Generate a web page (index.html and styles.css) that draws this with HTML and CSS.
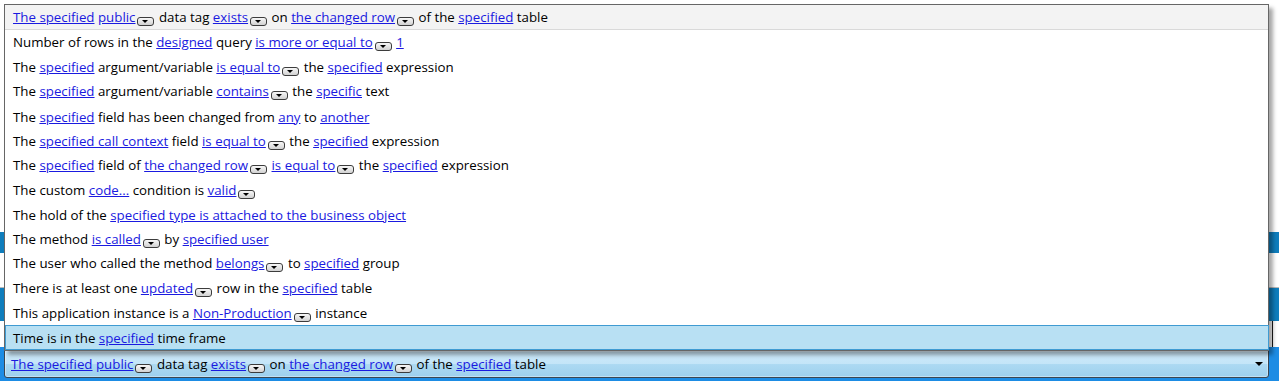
FILE: index.html
```html
<!DOCTYPE html>
<html lang="en">
<head>
  <meta charset="UTF-8" />
  <title>Condition picker</title>
  <link rel="stylesheet" href="styles.css">
</head>
<body>
  <div class="screen">
    <div class="band plain top"></div>
    <div class="band blue short"></div>
    <div class="band plain mid"></div>
    <div class="band blue tall"></div>
    <div class="band plain low"></div>

    <div class="band editor">
      <div class="combo">
        <span class="txt"><a>The specified</a> <a>public</a><span class="dd"></span> data tag <a>exists</a><span class="dd"></span> on <a>the changed row</a><span class="dd"></span> of the <a>specified</a> table</span>
        <span class="arrow"></span>
      </div>
    </div>

    <div class="popup">
      <div class="row head"><span class="txt"><a>The specified</a> <a>public</a><span class="dd"></span> data tag <a>exists</a><span class="dd"></span> on <a>the changed row</a><span class="dd"></span> of the <a>specified</a> table</span></div>
      <div class="row"><span class="txt">Number of rows in the <a>designed</a> query <a>is more or equal to</a><span class="dd"></span> <a>1</a></span></div>
      <div class="row"><span class="txt">The <a>specified</a> argument/variable <a>is equal to</a><span class="dd"></span> the <a>specified</a> expression</span></div>
      <div class="row"><span class="txt">The <a>specified</a> argument/variable <a>contains</a><span class="dd"></span> the <a>specific</a> text</span></div>
      <div class="row"><span class="txt">The <a>specified</a> field has been changed from <a>any</a> to <a>another</a></span></div>
      <div class="row"><span class="txt">The <a>specified call context</a> field <a>is equal to</a><span class="dd"></span> the <a>specified</a> expression</span></div>
      <div class="row"><span class="txt">The <a>specified</a> field of <a>the changed row</a><span class="dd"></span> <a>is equal to</a><span class="dd"></span> the <a>specified</a> expression</span></div>
      <div class="row"><span class="txt">The custom <a>code...</a> condition is <a>valid</a><span class="dd"></span></span></div>
      <div class="row"><span class="txt">The hold of the <a>specified type is attached to the business object</a></span></div>
      <div class="row"><span class="txt">The method <a>is called</a><span class="dd"></span> by <a>specified user</a></span></div>
      <div class="row"><span class="txt">The user who called the method <a>belongs</a><span class="dd"></span> to <a>specified</a> group</span></div>
      <div class="row"><span class="txt">There is at least one <a>updated</a><span class="dd"></span> row in the <a>specified</a> table</span></div>
      <div class="row"><span class="txt">This application instance is a <a>Non-Production</a><span class="dd"></span> instance</span></div>
      <div class="row selected"><span class="txt">Time is in the <a>specified</a> time frame</span></div>
    </div>
  </div>
</body>
</html>
```

FILE: styles.css
```css
* {
  margin: 0; padding: 0; box-sizing: border-box;
}

body {
  background-color: #ffffff;
  font-family: 'Open Sans', 'Noto Sans', sans-serif;
  font-size: 13.3px;
  color: #000000;
}

.screen {
  position: relative;
  width: 1279px;
  height: 381px;
  overflow: hidden;
}

.band {
  width: 100%;
}

.band.top { height: 232px; }
.band.mid { height: 35px; border-bottom: 1px solid #b9b9b9; }
.band.low {
  height: 26px;
  width: auto;
  margin-right: 6px;
  border-right: 1px solid #1a1a1a;
}

.band.blue { background-color: #0f7dbc; }
.band.short { height: 21px; }
.band.tall { height: 33px; }

.band.editor {
  height: 34px;
  background-color: #1d8ce4;
  padding: 3px 10px 3px 4px;
}

a {
  color: #1a1ae0;
  text-decoration: underline;
}

.txt {
  white-space: nowrap;
  line-height: 1;
  padding-top: 3px;
}

/* small drop-down button after a link */
.dd {
  display: inline-block;
  position: relative;
  width: 17px;
  height: 9px;
  margin-left: 2px;
  margin-right: 1px;
  vertical-align: -4px;
  border: 1px solid #3c3c3c;
  border-radius: 3px;
  background: linear-gradient(#f7f7f7, #d2d2d2);
}

.dd::after {
  content: '';
  position: absolute;
  left: 4px;
  top: 2px;
  border-left: 3.5px solid transparent;
  border-right: 3.5px solid transparent;
  border-top: 3px solid #000000;
}

.combo {
  display: flex;
  align-items: center;
  justify-content: space-between;
  height: 28px;
  padding: 0 5px 0 6px;
  border: 1px solid #3a4652;
  border-radius: 0 0 3px 3px;
  background: linear-gradient(#cde9fa 0%, #c4e5f8 48%, #acd9f2 52%, #9dd0ee 100%);
  box-shadow: inset 0 0 0 1px rgba(255, 255, 255, 0.35);
}

.arrow {
  width: 0;
  height: 0;
  border-left: 4px solid transparent;
  border-right: 4px solid transparent;
  border-top: 4px solid #000000;
}

.popup {
  position: absolute;
  left: 4px;
  top: 4px;
  width: 1265px;
  height: 347px;
  display: flex;
  flex-direction: column;
  background-color: #ffffff;
  border: 1px solid #666666;
  box-shadow: 4px 4px 4px rgba(0, 0, 0, 0.35);
}

.row {
  flex: 1;
  display: flex;
  align-items: center;
  padding-left: 8px;
}

.row.head {
  flex: none;
  height: 25px;
  background-color: #f3f3f3;
  border-bottom: 1px solid #d9d9d9;
}

.row.selected {
  flex: none;
  height: 25px;
  margin: 0 -1px 0 0;
  background-color: #b8e0f3;
  border: 1px solid #3f9bd2;
  padding-left: 7px;
}

.row.selected .txt {
  padding-top: 2px;
}
```
